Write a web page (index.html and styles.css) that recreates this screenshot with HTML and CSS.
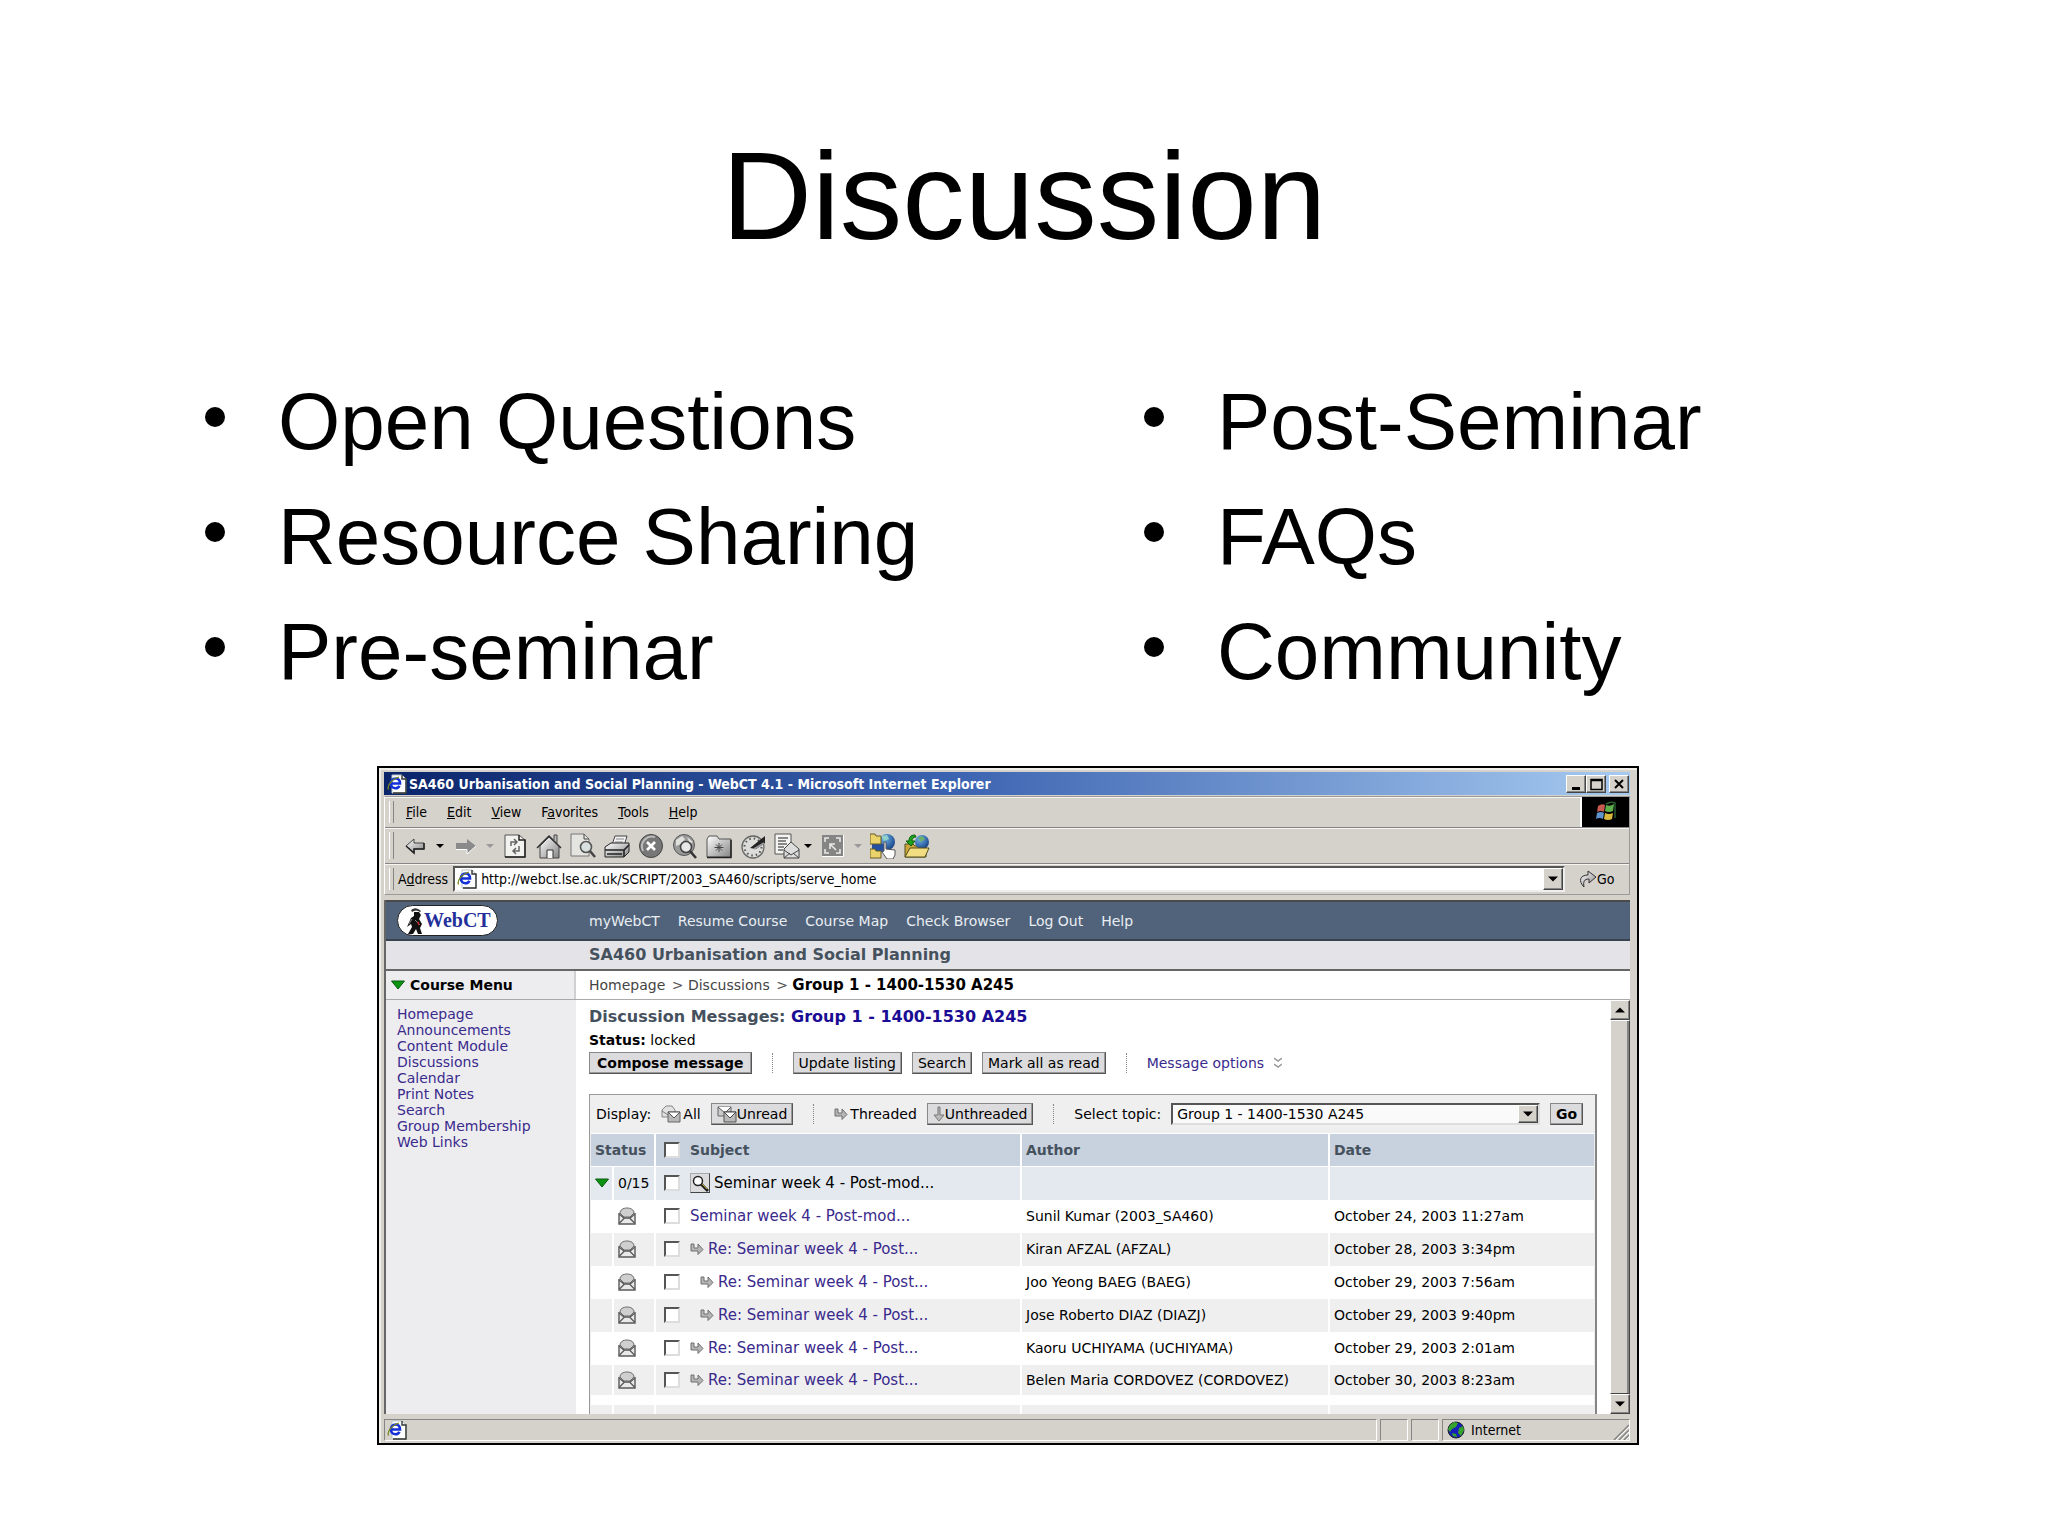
FILE: index.html
```html
<!DOCTYPE html>
<html lang="en">
<head>
    <meta charset="UTF-8">
    <meta name="viewport" content="width=device-width, initial-scale=1.0">
    <title>Discussion</title>
    <link rel="stylesheet" href="styles.css">
</head>
<body>
    <!-- Shared icons -->
    <svg class="sprite" aria-hidden="true">
        <defs>
            <linearGradient id="metal" x1="0" y1="0" x2="1" y2="1">
                <stop offset="0" stop-color="#fff"/>
                <stop offset="1" stop-color="#858585"/>
            </linearGradient>
            <radialGradient id="globe" cx=".35" cy=".3" r=".8">
                <stop offset="0" stop-color="#6fb4e8"/>
                <stop offset="1" stop-color="#123a80"/>
            </radialGradient>
        </defs>
        <symbol id="ie-page" viewBox="0 0 20 20">
            <path d="M5 1h10l4 4v14H5z" fill="#fff" stroke="#b9c3c9"/>
            <path d="M15 1v4h4v14H6" fill="none" stroke="#30352f" stroke-width="1.4"/>
            <path d="M4 9.500h9c0-3.500-2-5-4.300-5-3 0-4.800 2.200-4.800 5s2 4.800 4.600 4.800c1.800 0 3.200-.8 4-2.400" fill="none" stroke="#1430d8" stroke-width="2.600"/>
            <path d="M1.500 15.500C0 12 4 5.500 12 3" fill="none" stroke="#7a8b20" stroke-width="1.300"/>
        </symbol>
        <symbol id="down" viewBox="0 0 8 8">
            <path d="M0 2h8L4 6z" fill="currentColor"/>
        </symbol>
        <symbol id="up" viewBox="0 0 8 8">
            <path d="M0 6h8L4 2z" fill="currentColor"/>
        </symbol>
        <symbol id="green" viewBox="0 0 14 10">
            <path d="M.5 1h13L7 9z" fill="#0a9410" stroke="#0c5a10"/>
        </symbol>
        <symbol id="mail" viewBox="0 0 18 18">
            <path d="M1 6v11h16V6" fill="#e9e9ea" stroke="#5a5a5a" stroke-width="1.400"/>
            <path d="M2 6C2 3 5 1 9 1s7 2 7 5l-4 4H6z" fill="#cfcfcf" stroke="#6d6d6d"/>
            <path d="M1 7l5 4h6l5-4M1 16.500L6.500 11M17 16.500L11.500 11" fill="none" stroke="#5a5a5a" stroke-width="1.300"/>
        </symbol>
        <symbol id="reply" viewBox="0 0 14 12">
            <path d="M1 1h3v4h4V1l5 5.500-5 5V8H1z" fill="#b5b5b5" stroke="#6f6f6f"/>
        </symbol>
        <symbol id="mails" viewBox="0 0 20 18">
            <path d="M1 5l4-4h6l3 4v7H1z" fill="#e2e2e2" stroke="#858585"/>
            <path d="M1 6l6 4" fill="none" stroke="#777"/>
            <path d="M7 7h12v10H7z" fill="#b8b8b8" stroke="#666"/>
            <path d="M7 7l6 6 6-6z" fill="#fff" stroke="#555"/>
        </symbol>
        <symbol id="mails-closed" viewBox="0 0 20 18">
            <path d="M1 2h13v9H1z" fill="#ccc" stroke="#666"/>
            <path d="M1 2l7 6 6-6" fill="#fff" stroke="#555"/>
            <path d="M7 7h12v10H7z" fill="#b8b8b8" stroke="#555"/>
            <path d="M7 7l6 6 6-6z" fill="#fff" stroke="#444"/>
        </symbol>
    </svg>

    <main class="slide">
        <h1>Discussion</h1>

        <div class="points">
            <ul>
                <li>Open Questions</li>
                <li>Resource Sharing</li>
                <li>Pre-seminar</li>
            </ul>
            <ul>
                <li>Post-Seminar</li>
                <li>FAQs</li>
                <li>Community</li>
            </ul>
        </div>

        <div class="stage">
        <section class="window">
            <header class="title-bar">
                <svg class="page-icon"><use href="#ie-page"/></svg>
                <span class="title-text">SA460 Urbanisation and Social Planning - WebCT 4.1 - Microsoft Internet Explorer</span>
                <button class="win-btn" aria-label="Minimize"><svg viewBox="0 0 16 14"><path d="M4 11.500h8" stroke="#000" stroke-width="3"/></svg></button>
                <button class="win-btn" aria-label="Maximize"><svg viewBox="0 0 16 14"><path d="M3 2.500h11v10H3zM3 3.500h11" fill="none" stroke="#000" stroke-width="1.500"/></svg></button>
                <button class="win-btn close" aria-label="Close"><svg viewBox="0 0 16 14"><path d="M4 3l8 8M12 3l-8 8" stroke="#000" stroke-width="2"/></svg></button>
            </header>

            <div class="chrome">
                <div class="bar menu-bar">
                    <nav class="menus">
                        <button><u>F</u>ile</button>
                        <button><u>E</u>dit</button>
                        <button><u>V</u>iew</button>
                        <button>F<u>a</u>vorites</button>
                        <button><u>T</u>ools</button>
                        <button><u>H</u>elp</button>
                    </nav>
                    <div class="throbber">
                        <svg viewBox="0 0 24 22">
                            <path d="M4 5q4-3 7-1l-1 7q-3-2-7 0z" fill="#c65a50"/>
                            <path d="M12 4q4 2 8-1l-1 7q-4 2-8 0z" fill="#5fae4c"/>
                            <path d="M3 12q4-2 7 0l-1 6q-4-2-7 0z" fill="#5f93cc"/>
                            <path d="M11 12q4 2 8 0l-1 6q-4 2-8 0z" fill="#d8b93c"/>
                            <path d="M12 3q5-3 9-1v15" fill="none" stroke="#285a30" stroke-width="1.500"/>
                        </svg>
                    </div>
                </div>

                <div class="bar tool-bar">
                    <button aria-label="Back"><svg viewBox="0 0 26 26"><path d="M4 13l8-7v4h10v6H12v4z" fill="url(#metal)" stroke="#444"/><path d="M4 13l8 7v-4h10v-6" fill="none" stroke="#222" stroke-width="1.500"/></svg></button>
                    <button class="caret" aria-label="Back history"><svg><use href="#down"/></svg></button>
                    <button aria-label="Forward"><svg viewBox="0 0 26 26"><path d="M24 13l-9-7v4H4v6h11v5z" fill="#8a8a8a"/><path d="M4 16.500h11v4.500l9-8" fill="none" stroke="#fff"/></svg></button>
                    <button class="caret off" aria-label="Forward history"><svg><use href="#down"/></svg></button>
                    <button aria-label="Refresh"><svg viewBox="0 0 26 26"><path d="M3 2h14l6 5v17H3z" fill="#f2f2ee" stroke="#555"/><path d="M17 2v5h6v17H3" fill="none" stroke="#222" stroke-width="1.500"/><path d="M9 13V9h5m-2-3l3 3-3 3M17 13v5h-5m2-3l-3 3 3 3" fill="none" stroke="#666" stroke-width="1.500"/></svg></button>
                    <button aria-label="Home"><svg viewBox="0 0 26 26"><path d="M18 7V2h3v8" fill="#bbb" stroke="#444"/><path d="M4 13v12h19V13L13 4z" fill="url(#metal)" stroke="#444"/><path d="M1 15L13 3l12 12" fill="none" stroke="#333" stroke-width="1.500"/><path d="M11 25v-8h6v8" fill="#f5f5f5" stroke="#333"/></svg></button>
                    <button aria-label="Print preview"><svg viewBox="0 0 26 26"><path d="M1 1h13l5 5v17H1z" fill="#e4e4e0" stroke="#777"/><path d="M14 1v5h5" fill="none" stroke="#444"/><circle cx="16" cy="14" r="5.500" fill="#d8e0e0" stroke="#555" stroke-width="1.600"/><path d="M20 18l5 6" stroke="#444" stroke-width="2.500"/></svg></button>
                    <button aria-label="Print"><svg viewBox="0 0 26 26"><path d="M8 12l3-9h12l-3 10z" fill="#f2f2f2" stroke="#444"/><path d="M12 6h8M11 9h8" stroke="#888"/><path d="M1 14l6-4h18v9l-5 5H1z" fill="url(#metal)" stroke="#222"/><path d="M1 17h19l5-5M3 21h15M20 17v7" fill="none" stroke="#222" stroke-width="1.600"/></svg></button>
                    <button aria-label="Stop"><svg viewBox="0 0 26 26"><circle cx="13" cy="13" r="11.500" fill="#777" stroke="#444"/><path d="M5 18A10 10 0 0 1 17 4" fill="none" stroke="#bbb" stroke-width="2"/><path d="M9 9l8 8M17 9l-8 8" stroke="#fff" stroke-width="2.600"/></svg></button>
                    <button aria-label="Search"><svg viewBox="0 0 26 26"><circle cx="12" cy="12" r="10.500" fill="#999" stroke="#555"/><path d="M4 7l6-4 3 3-4 5-5 2zM15 4l6 5-3 2z" fill="#e0e0dc"/><circle cx="14" cy="14" r="5.500" fill="#e8e8e8" stroke="#444" stroke-width="1.600"/><path d="M18 18l6 7" stroke="#333" stroke-width="2.600"/></svg></button>
                    <button aria-label="Favorites"><svg viewBox="0 0 26 26"><path d="M1 24V6l2-3h8l2 3h12v18z" fill="url(#metal)" stroke="#555"/><path d="M1 24.500h24V7" fill="none" stroke="#222" stroke-width="1.500"/><path d="M13 10v9M8.500 14.500h9M10 11.500l6 6M16 11.500l-6 6" stroke="#444"/></svg></button>
                    <button aria-label="History"><svg viewBox="0 0 26 26"><circle cx="13" cy="14" r="11" fill="#dcdcd8" stroke="#666" stroke-width="1.300"/><circle cx="13" cy="14" r="8.500" fill="none" stroke="#555" stroke-width="2" stroke-dasharray="1.500 3"/><path d="M10 15l15-12v7l-9 6z" fill="#222"/><path d="M14 16l10-6" stroke="#999" stroke-width="2"/></svg></button>
                    <button aria-label="Mail"><svg viewBox="0 0 26 26"><path d="M1 1h16v20H1z" fill="#f4f4f2" stroke="#555"/><path d="M4 5h10M4 8h8M4 11h9M4 14h6M4 17h5" stroke="#666" stroke-width="1.500"/><path d="M10 16l7-7 8 7v9H10z" fill="#ddd" stroke="#444"/><path d="M10 17l7 5 8-5M10 25l6-5M25 25l-6-5" fill="none" stroke="#444"/></svg></button>
                    <button class="caret attached" aria-label="Mail options"><svg><use href="#down"/></svg></button>
                    <button aria-label="Full screen"><svg viewBox="0 0 26 26"><path d="M2 2h21v21H2z" fill="#858585"/><path d="M23.500 2v21.500H2" fill="none" stroke="#fff"/><path d="M5 9V5h4M16 5h4v4M20 16v4h-4M9 20H5v-4M16 17l-6-6M10 16v-5h5" fill="none" stroke="#e8e8e4" stroke-width="1.600"/></svg></button>
                    <button class="caret off" aria-label="Full screen options"><svg><use href="#down"/></svg></button>
                    <button aria-label="Explorer folders"><svg viewBox="0 0 26 26"><circle cx="17" cy="9" r="8" fill="url(#globe)"/><path d="M11 3l6-1 2 4-5 2z" fill="#8fd0c8"/><path d="M2 11h14v8H2z" fill="#2450a0"/><path d="M0 1h5l1 2h5v8H0zM0 16h5l1 2h5v7H0z" fill="#ead36a" stroke="#6b5b24"/><path d="M14 9h2v7l9 1v5l-2 4h-6l-5-7 2-1z" fill="#fff" stroke="#555"/></svg></button>
                    <button aria-label="Web folders"><svg viewBox="0 0 26 26"><path d="M1 24V11h8l2 2h11v11z" fill="#c9a53a" stroke="#54501c"/><circle cx="18" cy="9" r="7" fill="url(#globe)"/><path d="M14 5l4-2 3 3-4 3z" fill="#6db06a"/><path d="M1 24l5-9h19l-4 9z" fill="#f2dd82" stroke="#54501c"/><path d="M11 2C6 2 5 5 5 8H2l5 5 4-5H8c0-2 1-4 4-4z" fill="#1ea31e" stroke="#0b5f0b"/></svg></button>
                </div>

                <div class="bar address-bar">
                    <label for="address">A<u>d</u>dress</label>
                    <div class="address-box">
                        <svg class="page-icon"><use href="#ie-page"/></svg>
                        <input type="text" id="address" value="http://webct.lse.ac.uk/SCRIPT/2003_SA460/scripts/serve_home">
                        <button class="drop-btn" aria-label="Show addresses"><svg><use href="#down"/></svg></button>
                    </div>
                    <button class="go-link">
                        <svg viewBox="0 0 18 20"><path d="M5 18C-1 12 1 6 9 6V2l8 6-7 6v-4c-5 0-6 3-5 8z" fill="url(#metal)" stroke="#333"/></svg>Go
                    </button>
                </div>
            </div>

            <div class="page">
                <div class="site-nav">
                    <a class="logo" href="#">
                        <svg viewBox="0 0 18 28">
                            <path d="M5 3q5-4 10 1l-1 1q-4-3-8 0z" fill="#333"/>
                            <path d="M8 5h5l2 3-2 4 3 5-2 4 2 6h-4l-2-5-3 5H2l4-7-1-3-4 3 4-9 3-2z" fill="#111"/>
                            <path d="M9 13l5 5M3 17l3-5" stroke="#888"/>
                            <path d="M12 15l1 3" stroke="#c22" stroke-width="1.500"/>
                        </svg>WebCT
                    </a>
                    <nav class="links">
                        <a href="#">myWebCT</a>
                        <a href="#">Resume Course</a>
                        <a href="#">Course Map</a>
                        <a href="#">Check Browser</a>
                        <a href="#">Log Out</a>
                        <a href="#">Help</a>
                    </nav>
                </div>
                <h2 class="course-title">SA460 Urbanisation and Social Planning</h2>
                <div class="crumb-row">
                    <h3 class="course-menu"><svg><use href="#green"/></svg>Course Menu</h3>
                    <div class="crumbs"><a href="#">Homepage</a> &gt; <a href="#">Discussions</a> &gt; <b>Group 1 - 1400-1530 A245</b></div>
                </div>

                <div class="columns">
                    <nav class="sidebar">
                        <a href="#">Homepage</a>
                        <a href="#">Announcements</a>
                        <a href="#">Content Module</a>
                        <a href="#">Discussions</a>
                        <a href="#">Calendar</a>
                        <a href="#">Print Notes</a>
                        <a href="#">Search</a>
                        <a href="#">Group Membership</a>
                        <a href="#">Web Links</a>
                    </nav>

                    <div class="content">
                        <h3 class="board-title">Discussion Messages: <a href="#">Group 1 - 1400-1530 A245</a></h3>
                        <p class="status"><b>Status:</b> locked</p>
                        <div class="actions">
                            <button class="btn strong">Compose message</button>
                            <span class="dots"></span>
                            <button class="btn">Update listing</button>
                            <button class="btn">Search</button>
                            <button class="btn">Mark all as read</button>
                            <span class="dots"></span>
                            <a class="options" href="#">Message options <svg viewBox="0 0 8 12"><path d="M0 1l4 3 4-3M0 7l4 3 4-3" fill="none" stroke="#999" stroke-width="1.500"/></svg></a>
                        </div>

                        <div class="panel">
                            <div class="filters">
                                <span>Display:</span>
                                <span class="current"><svg class="mails"><use href="#mails"/></svg>All</span>
                                <button class="btn"><svg class="mails"><use href="#mails-closed"/></svg>Unread</button>
                                <span class="dots"></span>
                                <span class="current"><svg class="reply"><use href="#reply"/></svg>Threaded</span>
                                <button class="btn"><svg class="flat" viewBox="0 0 12 16"><path d="M5 1h2v8h4l-5 6-5-6h4z" fill="#bbb" stroke="#777"/></svg>Unthreaded</button>
                                <span class="dots"></span>
                                <label for="topic">Select topic:</label>
                                <div class="select-box">
                                    <select id="topic">
                                        <option>Group 1 - 1400-1530 A245</option>
                                    </select>
                                    <span class="drop-btn"><svg><use href="#down"/></svg></span>
                                </div>
                                <button class="btn go">Go</button>
                            </div>

                            <table>
                                <colgroup>
                                    <col class="col-toggle">
                                    <col class="col-status">
                                    <col class="col-subject">
                                    <col class="col-author">
                                    <col>
                                </colgroup>
                                <thead>
                                    <tr>
                                        <th colspan="2">Status</th>
                                        <th><div class="subject"><input type="checkbox" aria-label="Select all">Subject</div></th>
                                        <th>Author</th>
                                        <th>Date</th>
                                    </tr>
                                </thead>
                                <tbody>
                                    <tr class="topic">
                                        <td><svg class="toggle"><use href="#green"/></svg></td>
                                        <td>0/15</td>
                                        <td><div class="subject"><input type="checkbox" aria-label="Select topic"><button class="find" aria-label="View thread"><svg viewBox="0 0 18 18"><circle cx="7" cy="7" r="4.500" fill="#fff" stroke="#222" stroke-width="1.500"/><path d="M10 10l7 7" stroke="#222" stroke-width="3"/><path d="M11 10l5 5" stroke="#b5a52a"/></svg></button>Seminar week 4 - Post-mod...</div></td>
                                        <td></td>
                                        <td></td>
                                    </tr>
                                    <tr>
                                        <td></td>
                                        <td><svg class="mail"><use href="#mail"/></svg></td>
                                        <td><div class="subject"><input type="checkbox" aria-label="Select message"><a href="#">Seminar week 4 - Post-mod...</a></div></td>
                                        <td>Sunil Kumar (2003_SA460)</td>
                                        <td>October 24, 2003 11:27am</td>
                                    </tr>
                                    <tr>
                                        <td></td>
                                        <td><svg class="mail"><use href="#mail"/></svg></td>
                                        <td><div class="subject"><input type="checkbox" aria-label="Select message"><svg class="reply"><use href="#reply"/></svg><a href="#">Re: Seminar week 4 - Post...</a></div></td>
                                        <td>Kiran AFZAL (AFZAL)</td>
                                        <td>October 28, 2003 3:34pm</td>
                                    </tr>
                                    <tr>
                                        <td></td>
                                        <td><svg class="mail"><use href="#mail"/></svg></td>
                                        <td><div class="subject nested"><input type="checkbox" aria-label="Select message"><svg class="reply"><use href="#reply"/></svg><a href="#">Re: Seminar week 4 - Post...</a></div></td>
                                        <td>Joo Yeong BAEG (BAEG)</td>
                                        <td>October 29, 2003 7:56am</td>
                                    </tr>
                                    <tr>
                                        <td></td>
                                        <td><svg class="mail"><use href="#mail"/></svg></td>
                                        <td><div class="subject nested"><input type="checkbox" aria-label="Select message"><svg class="reply"><use href="#reply"/></svg><a href="#">Re: Seminar week 4 - Post...</a></div></td>
                                        <td>Jose Roberto DIAZ (DIAZJ)</td>
                                        <td>October 29, 2003 9:40pm</td>
                                    </tr>
                                    <tr>
                                        <td></td>
                                        <td><svg class="mail"><use href="#mail"/></svg></td>
                                        <td><div class="subject"><input type="checkbox" aria-label="Select message"><svg class="reply"><use href="#reply"/></svg><a href="#">Re: Seminar week 4 - Post...</a></div></td>
                                        <td>Kaoru UCHIYAMA (UCHIYAMA)</td>
                                        <td>October 29, 2003 2:01am</td>
                                    </tr>
                                    <tr class="last">
                                        <td></td>
                                        <td><svg class="mail"><use href="#mail"/></svg></td>
                                        <td><div class="subject"><input type="checkbox" aria-label="Select message"><svg class="reply"><use href="#reply"/></svg><a href="#">Re: Seminar week 4 - Post...</a></div></td>
                                        <td>Belen Maria CORDOVEZ (CORDOVEZ)</td>
                                        <td>October 30, 2003 8:23am</td>
                                    </tr>
                                    <tr class="gap"><td colspan="5"></td></tr>
                                    <tr class="next"><td></td><td></td><td></td><td></td><td></td></tr>
                                </tbody>
                            </table>
                        </div>
                    </div>

                    <div class="scrollbar">
                        <button aria-label="Scroll up"><svg><use href="#up"/></svg></button>
                        <div class="thumb"></div>
                        <button aria-label="Scroll down"><svg><use href="#down"/></svg></button>
                    </div>
                </div>
            </div>

            <footer class="status-bar">
                <div class="cell main-cell"><svg class="page-icon"><use href="#ie-page"/></svg></div>
                <div class="cell"></div>
                <div class="cell"></div>
                <div class="cell zone">
                    <svg class="world" viewBox="0 0 18 18"><circle cx="9" cy="9" r="8" fill="#1420b8" stroke="#222"/><path d="M3 4l4-3 4 1-2 4-4 2-2 3-2-3zM12 7l4-2 1 4-3 6-3-3zM5 12l4 1 1 3-4-1z" fill="#35a32c"/></svg>
                    Internet
                    <svg class="grip" viewBox="0 0 16 16"><path d="M1 16L16 1M6 16L16 6M11 16l5-5" stroke="#858585" stroke-width="1.500"/><path d="M3 16L16 3M8 16l8-8M13 16l3-3" stroke="#fff"/></svg>
                </div>
            </footer>
        </section>
        </div>
    </main>
</body>
</html>
```
FILE: styles.css
```css
* {
    box-sizing: border-box;
}

body {
    margin: 0;
    background: #fff;
    color: #000;
    font-family: "Liberation Sans", Arial, sans-serif;
}

a {
    color: #3a2a8c;
    text-decoration: none;
}

button {
    margin: 0;
    padding: 0;
    border: none;
    background: none;
    color: inherit;
    font: inherit;
    white-space: nowrap;
}

svg {
    display: block;
    flex: none;
}

.sprite {
    position: absolute;
    width: 0;
    height: 0;
}

/* Slide */
h1 {
    margin: 0;
    padding-top: 124px;
    font-size: 125px;
    font-weight: normal;
    line-height: 144px;
    text-align: center;
}

.points {
    display: grid;
    grid-template-columns: 939fr 904fr;
    margin-top: 96px;
    padding-left: 205px;
}

.points ul {
    margin: 0;
    padding: 0;
    list-style: none;
}

.points li {
    display: flex;
    align-items: center;
    gap: 53px;
    font-size: 80px;
    line-height: 115px;
}

.points li::before {
    content: "";
    width: 20px;
    height: 20px;
    margin-bottom: 10px;
    border-radius: 50%;
    background: #000;
}

.stage {
    display: grid;
    grid-template-columns: 377fr 1262fr 409fr;
    margin-top: 57px;
}

/* Browser window */
.window {
    grid-column: 2;
    border: 2px solid #000;
    padding: 4px 7px 2px 5px;
    background: #d5d2cb;
    box-shadow: inset 2px 2px #efeeea;
    font-family: "DejaVu Sans Condensed", "DejaVu Sans", sans-serif;
    font-size: 14px;
}

.title-bar {
    display: flex;
    align-items: center;
    height: 23px;
    padding: 0 1px 0 3px;
    background: linear-gradient(to right, #0a246a, #3b62b0 45%, #a6caf0);
    color: #fff;
    font-weight: bold;
}

.page-icon {
    width: 20px;
    height: 20px;
}

.title-text {
    flex: 1;
    padding-left: 2px;
}

.win-btn,
.drop-btn,
.scrollbar button {
    display: flex;
    align-items: center;
    justify-content: center;
    width: 20px;
    height: 18px;
    border: 1px solid;
    border-color: #fff #444 #444 #fff;
    background: #d5d2cb;
    box-shadow: inset -1px -1px #858585;
    color: #000;
}

.win-btn svg {
    width: 16px;
    height: 14px;
}

.win-btn.close {
    margin-left: 3px;
}

.drop-btn svg,
.scrollbar svg {
    width: 10px;
    height: 10px;
}

.chrome {
    margin-top: 1px;
    border: 1px solid #999;
    border-left-color: #fff;
}

.bar {
    display: flex;
    align-items: center;
    border-bottom: 1px solid #858585;
    box-shadow: inset 0 1px #f6f5f2;
}

.bar::before {
    content: "";
    align-self: stretch;
    width: 3px;
    margin: 4px 0 4px 4px;
    border-right: 1px solid #858585;
    border-left: 1px solid #fff;
}

.menu-bar {
    height: 31px;
}

.menus {
    display: flex;
    flex: 1;
    gap: 20px;
    padding-left: 12px;
}

.throbber {
    display: flex;
    align-items: center;
    justify-content: center;
    width: 49px;
    height: 30px;
    border-left: 2px solid #fff;
    background: #000;
}

.throbber svg {
    width: 24px;
    height: 22px;
}

.tool-bar {
    gap: 8px;
    height: 36px;
}

.tool-bar button svg {
    width: 26px;
    height: 26px;
}

.tool-bar .caret svg {
    width: 8px;
    height: 8px;
}

.tool-bar .off {
    color: #999;
}

.tool-bar .attached {
    margin-left: -4px;
}

.address-bar {
    height: 30px;
    border-bottom: none;
}

.address-bar label {
    padding: 0 5px 0 4px;
}

.address-box {
    display: flex;
    flex: 1;
    align-items: center;
    height: 26px;
    border: 2px solid;
    border-color: #555 #eee #eee #555;
    padding-left: 2px;
    background: #fff;
}

.address-box input {
    flex: 1;
    border: none;
    padding: 0 4px;
    background: none;
    font: inherit;
    outline: none;
}

.address-box .drop-btn {
    height: 22px;
}

.go-link {
    display: flex;
    align-items: center;
    width: 64px;
    padding-left: 14px;
}

.go-link svg {
    width: 18px;
    height: 20px;
}

/* WebCT page */
.page {
    margin-top: 5px;
    border-left: 2px solid #666;
    background: #fff;
    font-family: "DejaVu Sans", Verdana, sans-serif;
}

.site-nav {
    display: flex;
    align-items: center;
    height: 41px;
    border-top: 2px solid #4a4a4a;
    border-bottom: 2px solid #37424f;
    background: #51637a;
}

.logo {
    display: flex;
    align-items: center;
    width: 101px;
    height: 31px;
    margin: 0 91px 0 11px;
    border: 1px solid #222;
    border-radius: 16px;
    padding-left: 8px;
    background: #fff;
    color: #24309a;
    font: bold 20px "Liberation Serif", serif;
}

.logo svg {
    width: 18px;
    height: 28px;
}

.links {
    display: flex;
    gap: 18px;
}

.links a {
    color: #e9eef3;
}

.course-title {
    margin: 0;
    padding-left: 203px;
    border-bottom: 2px solid #666;
    background: #e4e4e8;
    color: #46515e;
    font-size: 16px;
    line-height: 28px;
}

.crumb-row {
    display: flex;
    border-bottom: 1px solid #aaa;
    line-height: 28px;
}

.course-menu {
    display: flex;
    align-items: center;
    gap: 5px;
    width: 190px;
    margin: 0;
    border-right: 2px solid #d0d0d0;
    padding-left: 5px;
    background: #ededf0;
    font-size: 14px;
}

.course-menu svg,
.toggle {
    width: 14px;
    height: 10px;
}

.crumbs {
    padding-left: 13px;
    color: #555;
}

.crumbs a {
    margin-right: 2px;
    color: #444;
}

.crumbs b {
    color: #000;
    font-size: 15px;
}

.columns {
    display: flex;
}

.sidebar {
    width: 190px;
    padding: 6px 0 0 11px;
    background: #ededf0;
}

.sidebar a {
    display: block;
    line-height: 16px;
}

.content {
    flex: 1;
    min-width: 0;
    padding: 4px 13px 0 13px;
}

.board-title {
    margin: 0;
    color: #46515e;
    font-size: 16px;
    line-height: 25px;
}

.board-title a {
    color: #1a0c94;
}

.status {
    margin: 0;
    line-height: 23px;
}

.actions {
    display: flex;
    align-items: center;
    gap: 10px;
}

.btn {
    display: flex;
    align-items: center;
    height: 22px;
    border: 1px solid;
    border-color: #888 #555 #555 #888;
    padding: 0 5px;
    background: #dcdcde;
    box-shadow: inset -1px -1px #999;
}

.strong {
    padding: 0 7px;
    font-weight: bold;
}

.go {
    font-weight: bold;
}

.dots {
    height: 20px;
    margin: 0 10px;
    border-left: 1px dotted #888;
}

.options {
    display: flex;
    align-items: center;
    gap: 10px;
}

.options svg {
    width: 8px;
    height: 12px;
}

.panel {
    margin-top: 20px;
    border: 1px solid #999;
    border-right: 2px solid #858585;
    border-bottom: none;
    padding: 0 1px;
    background: #efeff0;
}

.filters {
    display: flex;
    align-items: center;
    gap: 10px;
    height: 38px;
    padding: 0 11px 0 5px;
}

.current {
    display: flex;
    align-items: center;
    gap: 2px;
}

.filters .mails {
    width: 20px;
    height: 18px;
}

.reply {
    width: 14px;
    height: 12px;
}

.flat {
    width: 12px;
    height: 16px;
}

.select-box {
    position: relative;
    flex: 1;
}

.select-box select {
    appearance: none;
    display: block;
    width: 100%;
    height: 22px;
    border: 2px solid;
    border-color: #555 #ddd #ddd #555;
    border-radius: 0;
    padding: 0 4px;
    background: #fafafa;
    color: #000;
    font: inherit;
}

.select-box .drop-btn {
    position: absolute;
    top: 2px;
    right: 2px;
    pointer-events: none;
}

/* Message table */
table {
    width: 100%;
    border-collapse: collapse;
    table-layout: fixed;
}

.col-toggle {
    width: 22px;
}

.col-status {
    width: 42px;
}

.col-subject {
    width: 366px;
}

.col-author {
    width: 308px;
}

th,
td {
    height: 33px;
    border-right: 2px solid #fff;
    padding: 0 4px;
    text-align: left;
    white-space: nowrap;
}

th:last-child,
td:last-child {
    border-right: none;
}

thead th {
    border-top: 1px solid #fff;
    border-bottom: 1px solid #fff;
    background: #c8d2df;
    color: #46515e;
}

tbody tr {
    background: #fff;
}

tbody tr:nth-child(odd) {
    background: #efeff0;
}

tbody tr.topic {
    background: #e3e9ee;
}

.last td {
    height: 30px;
}

tbody .gap {
    background: #fff;
}

.gap td {
    height: 10px;
}

tbody .next {
    background: #e8e8ea;
}

.next td {
    height: 9px;
}

.subject {
    display: flex;
    align-items: center;
    gap: 4px;
    padding-left: 4px;
}

tbody .subject {
    font-size: 15px;
}

.nested .reply {
    margin-left: 10px;
}

input[type="checkbox"] {
    appearance: none;
    width: 16px;
    height: 16px;
    margin: 0 6px 0 0;
    border: 2px solid;
    border-color: #555 #ddd #ddd #555;
    background: #fff;
}

.find {
    width: 20px;
    height: 20px;
    border: 1px solid;
    border-color: #aaa #444 #444 #aaa;
    background: #dcdcde;
}

.find svg,
.mail {
    width: 18px;
    height: 18px;
}

/* Scroll bar */
.scrollbar {
    display: flex;
    flex-direction: column;
    width: 20px;
    background: #d5d2cb;
}

.scrollbar button {
    height: 20px;
}

.thumb {
    flex: 1;
    border: 1px solid;
    border-color: #fff #444 #444 #fff;
    box-shadow: inset -2px 0 #858585;
}

.status-bar {
    display: flex;
    gap: 3px;
    margin-top: 5px;
}

.cell {
    display: flex;
    align-items: center;
    width: 28px;
    height: 22px;
    border: 1px solid;
    border-color: #858585 #fff #fff #858585;
}

.main-cell {
    flex: 1;
    padding-left: 2px;
}

.zone {
    gap: 6px;
    width: 188px;
    padding-left: 4px;
}

.world {
    width: 18px;
    height: 18px;
}

.grip {
    align-self: flex-end;
    width: 16px;
    height: 16px;
    margin-left: auto;
}
```
